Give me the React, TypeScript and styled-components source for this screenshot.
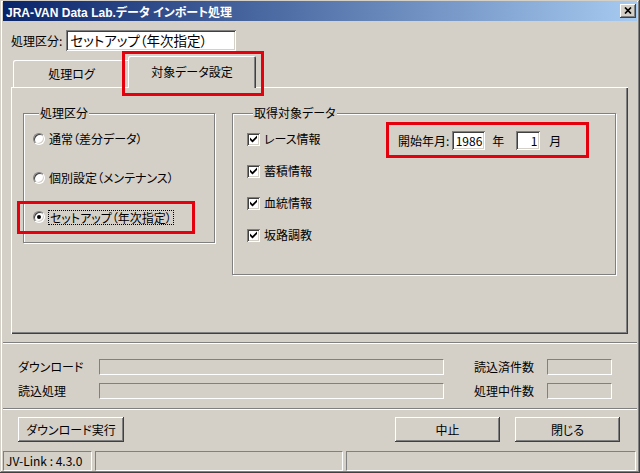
import styled, { createGlobalStyle } from "styled-components";

const face = `"Noto Sans CJK JP", "Noto Sans", sans-serif`;

const GlobalStyle = createGlobalStyle`
  html, body {
    margin: 0;
    padding: 0;
    background: #d4d0c8;
  }
  body {
    font-family: ${face};
    font-size: 12px;
    color: #000;
    overflow: hidden;
  }
  * {
    box-sizing: border-box;
  }
`;

const Window = styled.div`
  width: 640px;
  height: 473px;
  display: flex;
  flex-direction: column;
  padding: 1px 3px 2px 3px;
  background: #d4d0c8;
  box-shadow: inset -1px -1px #404040, inset 1px 1px #d4d0c8,
    inset -2px -2px #808080, inset 2px 2px #ffffff;
  font-feature-settings: "palt";
`;

const TitleBar = styled.div`
  flex: none;
  height: 20px;
  display: flex;
  align-items: center;
  justify-content: space-between;
  padding: 0 1px 0 3px;
  background: linear-gradient(to right, #0a246a, #a6caf0);
  color: #fff;
  font-family: "Liberation Sans", "Noto Sans CJK JP", sans-serif;
  font-weight: bold;
  font-size: 12px;
`;

const CloseButton = styled.button`
  width: 16px;
  height: 14px;
  padding: 0 1px 1px 0;
  border: none;
  background: #d4d0c8;
  box-shadow: inset -1px -1px #404040, inset 1px 1px #fff,
    inset -2px -2px #808080, inset 2px 2px #d4d0c8;
  display: flex;
  align-items: center;
  justify-content: center;
`;

const Main = styled.div`
  padding-left: 8px;
  display: flex;
  flex-direction: column;
`;

const TopRow = styled.div`
  margin-top: 9px;
  height: 21px;
  display: flex;
  align-items: center;
  gap: 4px;
`;

const TextBox = styled.div`
  width: 170px;
  height: 21px;
  padding-left: 4px;
  background: #fff;
  font-size: 13.5px;
  line-height: 21px;
  box-shadow: inset 1px 1px #808080, inset -1px -1px #fff,
    inset 2px 2px #404040, inset -2px -2px #d4d0c8;
`;

const TabRow = styled.div`
  margin-top: 5px;
  height: 31px;
  padding-left: 2px;
  display: flex;
  align-items: flex-end;
`;

const Tab = styled.div<{ $active?: boolean }>`
  position: relative;
  z-index: ${(p) => (p.$active ? 1 : 0)};
  width: ${(p) => (p.$active ? 128 : 117)}px;
  height: ${(p) => (p.$active ? 32 : 27)}px;
  margin-left: ${(p) => (p.$active ? -2 : 0)}px;
  margin-bottom: ${(p) => (p.$active ? -1 : 0)}px;
  padding-bottom: ${(p) => (p.$active ? 2 : 0)}px;
  display: flex;
  align-items: center;
  justify-content: center;
  background: #d4d0c8;
  border-radius: 2px 2px 0 0;
  box-shadow: inset 1px 1px #fff, inset -1px 0 #404040, inset -2px 0 #808080;
`;

const TabPanel = styled.div`
  width: 617px;
  height: 247px;
  padding: 19px 0 0 12px;
  display: flex;
  align-items: flex-start;
  gap: 17px;
  box-shadow: inset 1px 1px #fff, inset -1px -1px #404040,
    inset -2px -2px #808080;
`;

const GroupBox = styled.fieldset<{ $w: number; $h: number }>`
  margin: 0;
  padding: 11px 0 0 ${(p) => (p.$w > 300 ? 14 : 9)}px;
  min-width: 0;
  width: ${(p) => p.$w}px;
  height: ${(p) => p.$h}px;
  border: 1px solid #808080;
  box-shadow: inset 1px 1px #fff, 1px 1px #fff;
`;

const Legend = styled.legend`
  margin-left: 6px;
  padding: 0 1px;
  line-height: 14px;
  background: #d4d0c8;
`;

const OptionList = styled.div<{ $gap: number }>`
  display: flex;
  flex-direction: column;
  gap: ${(p) => p.$gap}px;
`;

const OptionRow = styled.label`
  position: relative;
  height: 16px;
  display: flex;
  align-items: center;
  gap: 4px;
  line-height: 16px;
  white-space: nowrap;
`;

const RadioDot = styled.span<{ $on?: boolean }>`
  flex: none;
  width: 12px;
  height: 12px;
  border-radius: 50%;
  background: #fff;
  border: 1px solid;
  border-color: #808080 #fff #fff #808080;
  box-shadow: inset 1px 1px #404040, inset -1px -1px #d4d0c8;
  display: flex;
  align-items: center;
  justify-content: center;

  &::after {
    content: "";
    width: 4px;
    height: 4px;
    border-radius: 50%;
    background: ${(p) => (p.$on ? "#000" : "transparent")};
  }
`;

const FocusText = styled.span`
  margin-left: -1px;
  padding: 0 1px;
  line-height: 13px;
  border: 1px dotted #000;
`;

const CheckBox = styled.span`
  flex: none;
  width: 13px;
  height: 13px;
  background: #fff;
  box-shadow: inset 1px 1px #808080, inset -1px -1px #fff,
    inset 2px 2px #404040, inset -2px -2px #d4d0c8;
  display: flex;
  align-items: center;
  justify-content: center;
`;

const TargetRow = styled.div`
  display: flex;
  align-items: flex-start;
`;

const CheckColumn = styled(OptionList)`
  width: 151px;
`;

const DateBlock = styled.div`
  position: relative;
  height: 19px;
  display: flex;
  align-items: center;
`;

const NumberBox = styled.div<{ $w: number }>`
  width: ${(p) => p.$w}px;
  height: 19px;
  margin-left: 3px;
  padding-right: 3px;
  background: #fff;
  text-align: right;
  line-height: 19px;
  box-shadow: inset 1px 1px #808080, inset -1px -1px #fff,
    inset 2px 2px #404040, inset -2px -2px #d4d0c8;
`;

const Unit = styled.span<{ $l: number; $r: number }>`
  margin: 0 ${(p) => p.$r}px 0 ${(p) => p.$l}px;
`;

const Highlight = styled.span<{ $x: number; $y: number; $w: number; $h: number }>`
  position: absolute;
  z-index: 2;
  left: ${(p) => p.$x}px;
  top: ${(p) => p.$y}px;
  width: ${(p) => p.$w}px;
  height: ${(p) => p.$h}px;
  border: 3px solid #e5000e;
  pointer-events: none;
`;

const Separator = styled.div<{ $mt: number }>`
  flex: none;
  height: 2px;
  margin-top: ${(p) => p.$mt}px;
  border-top: 1px solid #808080;
  border-bottom: 1px solid #fff;
`;

const StatsGrid = styled.div`
  padding: 15px 0 0 15px;
  display: grid;
  grid-template-columns: 81px 345px 103px 65px;
  grid-auto-rows: 16px;
  row-gap: 8px;
  align-items: center;
`;

const StatLabel = styled.span<{ $pad?: number }>`
  padding-left: ${(p) => p.$pad ?? 0}px;
  line-height: 16px;
  white-space: nowrap;
`;

const Well = styled.div`
  height: 16px;
  border: 1px solid;
  border-color: #808080 #fff #fff #808080;
`;

const ButtonRow = styled.div`
  margin-top: 7px;
  height: 25px;
  padding: 0 17px 0 15px;
  display: flex;
  justify-content: space-between;
`;

const ButtonGroup = styled.div`
  display: flex;
  gap: 15px;
`;

const Button = styled.button<{ $w: number }>`
  width: ${(p) => p.$w}px;
  height: 25px;
  padding: 0;
  border: none;
  background: #d4d0c8;
  color: #000;
  font-family: ${face};
  font-size: 12px;
  font-feature-settings: "palt";
  box-shadow: inset -1px -1px #404040, inset 1px 1px #fff,
    inset -2px -2px #808080, inset 2px 2px #d4d0c8;
`;

const StatusBar = styled.div`
  margin-top: 9px;
  height: 20px;
  padding-right: 1px;
  display: flex;
  gap: 3px;
`;

const StatusPane = styled.div<{ $w?: number }>`
  ${(p) => (p.$w ? `width: ${p.$w}px; flex: none;` : "flex: 1;")}
  height: 20px;
  padding-left: 2px;
  line-height: 18px;
  border: 1px solid;
  border-color: #808080 #fff #fff #808080;
  white-space: nowrap;
`;

const CheckMark = () => (
  <svg width="7" height="8" viewBox="0 0 7 8">
    <polygon points="0,2.5 2.5,5 7,0.5 7,3 2.5,7.5 0,5" fill="#000" />
  </svg>
);

const targets = ["レース情報", "蓄積情報", "血統情報", "坂路調教"];

export default function App() {
  return (
    <>
      <GlobalStyle />
      <Window>
        <TitleBar>
          <span>JRA-VAN Data Lab.データ インポート処理</span>
          <CloseButton aria-label="close">
            <svg width="8" height="7" viewBox="0 0 8 7">
              <path d="M1 0.5 L7 6.5 M7 0.5 L1 6.5" stroke="#000" strokeWidth="1.7" />
            </svg>
          </CloseButton>
        </TitleBar>

        <Main>
          <TopRow>
            <span>処理区分:</span>
            <TextBox>セットアップ（年次指定）</TextBox>
          </TopRow>

          <TabRow>
            <Tab>処理ログ</Tab>
            <Tab $active>
              対象データ設定
              <Highlight $x={-6} $y={-5} $w={142} $h={45} />
            </Tab>
          </TabRow>

          <TabPanel>
            <GroupBox $w={192} $h={137}>
              <Legend>処理区分</Legend>
              <OptionList $gap={23}>
                <OptionRow>
                  <RadioDot />
                  通常（差分データ）
                </OptionRow>
                <OptionRow>
                  <RadioDot />
                  個別設定（メンテナンス）
                </OptionRow>
                <OptionRow>
                  <RadioDot $on />
                  <FocusText>セットアップ（年次指定）</FocusText>
                  <Highlight $x={-16} $y={-8} $w={178} $h={33} />
                </OptionRow>
              </OptionList>
            </GroupBox>

            <GroupBox $w={384} $h={169}>
              <Legend>取得対象データ</Legend>
              <TargetRow>
                <CheckColumn $gap={16}>
                  {targets.map((t) => (
                    <OptionRow key={t}>
                      <CheckBox>
                        <CheckMark />
                      </CheckBox>
                      {t}
                    </OptionRow>
                  ))}
                </CheckColumn>
                <DateBlock>
                  <span>開始年月:</span>
                  <NumberBox $w={33}>1986</NumberBox>
                  <Unit $l={7} $r={9}>年</Unit>
                  <NumberBox $w={24}>1</NumberBox>
                  <Unit $l={9} $r={0}>月</Unit>
                  <Highlight $x={-12} $y={-9} $w={203} $h={36} />
                </DateBlock>
              </TargetRow>
            </GroupBox>
          </TabPanel>
        </Main>

        <Separator $mt={8} />

        <StatsGrid>
          <StatLabel>ダウンロード</StatLabel>
          <Well />
          <StatLabel $pad={30}>読込済件数</StatLabel>
          <Well />
          <StatLabel>読込処理</StatLabel>
          <Well />
          <StatLabel $pad={30}>処理中件数</StatLabel>
          <Well />
        </StatsGrid>

        <Separator $mt={9} />

        <ButtonRow>
          <Button $w={106}>ダウンロード実行</Button>
          <ButtonGroup>
            <Button $w={105}>中止</Button>
            <Button $w={105}>閉じる</Button>
          </ButtonGroup>
        </ButtonRow>

        <StatusBar>
          <StatusPane $w={89}>JV-Link : 4.3.0</StatusPane>
          <StatusPane $w={248} />
          <StatusPane />
        </StatusBar>
      </Window>
    </>
  );
}
